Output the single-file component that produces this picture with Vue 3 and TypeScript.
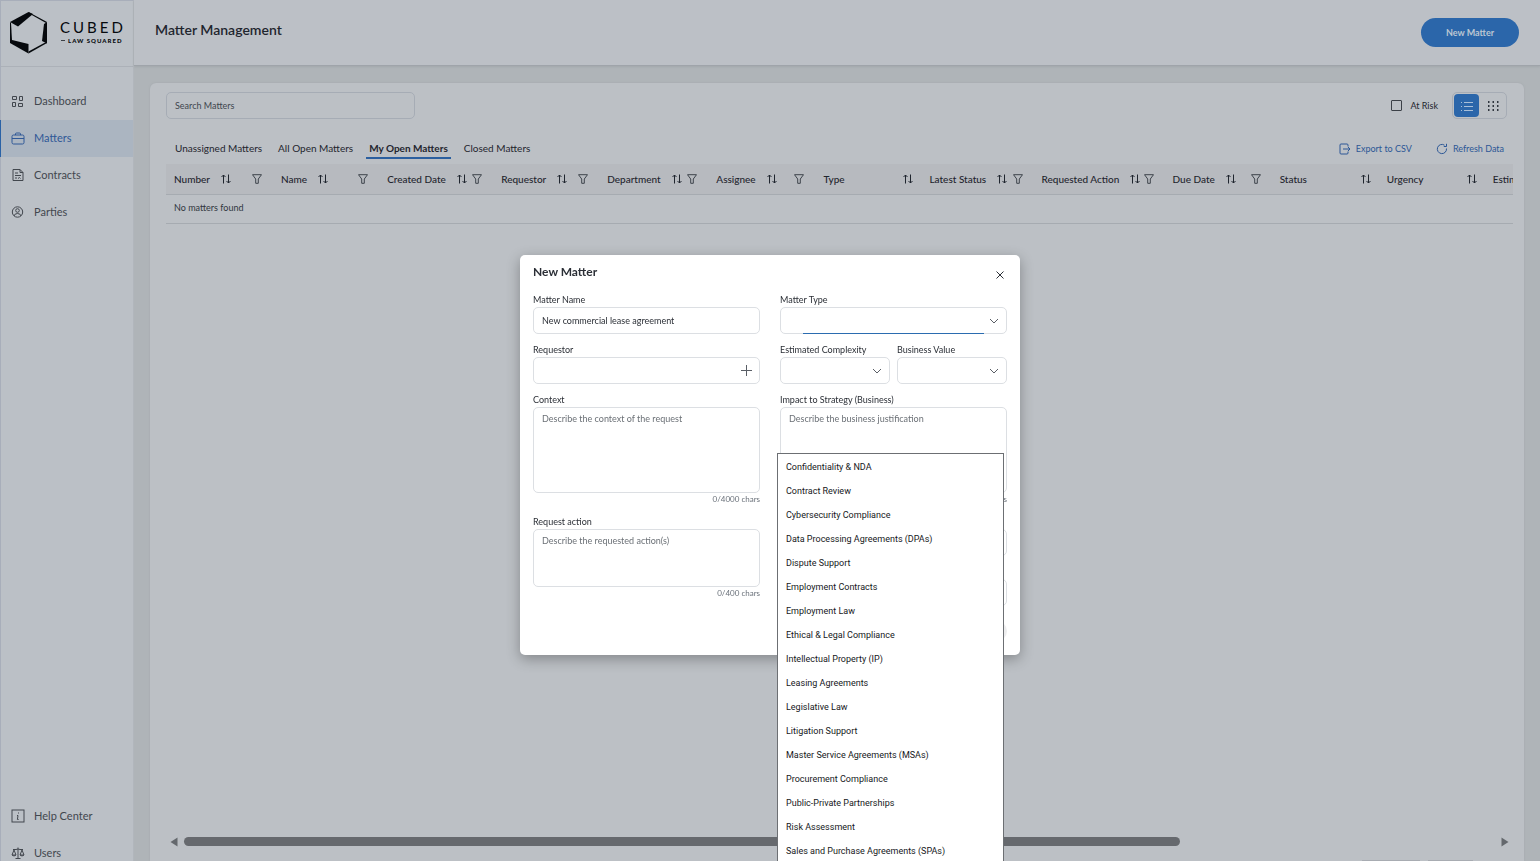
<script setup lang="ts">
import { ref } from 'vue'

interface NavItem { label: string; icon: string }
interface Column { label: string; width: number; filter: boolean }

const mainNav: NavItem[] = [
  { label: 'Dashboard', icon: 'grid' },
  { label: 'Matters', icon: 'case' },
  { label: 'Contracts', icon: 'doc' },
  { label: 'Parties', icon: 'person' },
]
const footNav: NavItem[] = [
  { label: 'Help Center', icon: 'info' },
  { label: 'Users', icon: 'scales' },
]
const tabs: string[] = ['Unassigned Matters', 'All Open Matters', 'My Open Matters', 'Closed Matters']
const columns: Column[] = [
  { label: 'Number', width: 107, filter: true },
  { label: 'Name', width: 106, filter: true },
  { label: 'Created Date', width: 114, filter: true },
  { label: 'Requestor', width: 106, filter: true },
  { label: 'Department', width: 109, filter: true },
  { label: 'Assignee', width: 107, filter: true },
  { label: 'Type', width: 106, filter: false },
  { label: 'Latest Status', width: 112, filter: true },
  { label: 'Requested Action', width: 131, filter: true },
  { label: 'Due Date', width: 107, filter: true },
  { label: 'Status', width: 107, filter: false },
  { label: 'Urgency', width: 106, filter: false },
  { label: 'Estimated Complexity', width: 160, filter: false },
]
const matterTypes: string[] = [
  'Confidentiality & NDA', 'Contract Review', 'Cybersecurity Compliance',
  'Data Processing Agreements (DPAs)', 'Dispute Support', 'Employment Contracts',
  'Employment Law', 'Ethical & Legal Compliance', 'Intellectual Property (IP)',
  'Leasing Agreements', 'Legislative Law', 'Litigation Support',
  'Master Service Agreements (MSAs)', 'Procurement Compliance',
  'Public-Private Partnerships', 'Risk Assessment', 'Sales and Purchase Agreements (SPAs)',
]

const activeNav = ref('Matters')
const activeTab = ref('My Open Matters')
const search = ref('')
const atRisk = ref(false)
const matterName = ref('New commercial lease agreement')
const requestor = ref('')
const matterType = ref('')
const context = ref('')
const impact = ref('')
const action = ref('')
</script>

<template>
  <div class="app">
    <aside class="sidebar">
      <div class="brand">
        <svg class="brand-mark" viewBox="0 0 38 42" aria-hidden="true">
          <path d="M0 10 18.500 0 23 2 8 14.500Z" />
          <path d="M18.500 0 37 10 36 11 20 2Z" />
          <path d="M37 10v21.500l-5-2.500 2-17Z" />
          <path d="M0 27.500 18.500 32v9.500L0 31Z" />
          <path d="M0 10 1 11 2 28 0 31Z" />
          <path d="M18.500 41.500 37 31 36 30 18.500 39.500Z" />
        </svg>
        <div class="brand-text">
          <span class="brand-name">CUBED</span>
          <span class="brand-sub"><i class="brand-by"></i>LAW SQUARED</span>
        </div>
      </div>
      <nav class="nav">
        <ul v-for="(group, g) in [mainNav, footNav]" :key="g" class="nav-group" :class="{ foot: g === 1 }">
          <li v-for="item in group" :key="item.label">
            <a href="#" class="nav-item" :class="{ active: item.label === activeNav }" @click.prevent="activeNav = item.label">
              <svg class="nav-icon" viewBox="0 0 14 14" aria-hidden="true">
                <g v-if="item.icon === 'grid'">
                  <path d="M1.500 2.500h4v3h-4ZM8.500 2.500h3v4h-3ZM1.500 8.500h3v4h-3ZM7.500 9.500h4v3h-4Z" />
                </g>
                <g v-else-if="item.icon === 'case'">
                  <rect x="1" y="4" width="12" height="9" rx="1.500" /><path d="M4.500 4V3q0-1 1-1h3q1 0 1 1v1M1 7.500h12" />
                </g>
                <g v-else-if="item.icon === 'doc'">
                  <path d="M2 1.500h7L12 4.500v8H2ZM9 1.500v3h3M4 5h3M4 7.500h6M4 10h2M7 10.500l1.500-1 1 1" />
                </g>
                <g v-else-if="item.icon === 'person'">
                  <circle cx="6.500" cy="7" r="5.200" /><circle cx="6.500" cy="5.500" r="1.800" /><path d="M3 11q.5-2.500 3.500-2.500T10 11" />
                </g>
                <g v-else-if="item.icon === 'info'">
                  <rect x="1" y="1" width="12" height="12" /><path d="M7.500 3.500v1M6 6.500h1l-.6 4h1.200" />
                </g>
                <g v-else>
                  <path d="M7 1.500V12M4.500 12.500h5M2 3.500h3L7 3l2 .5h3M3 4 1 9M3 4l2 5M1 9q2 2 4 0ZM11 4 9 9M11 4l2 5M9 9q2 2 4 0Z" />
                </g>
              </svg>
              <span>{{ item.label }}</span>
            </a>
          </li>
        </ul>
      </nav>
    </aside>

    <div class="content">
      <header class="topbar">
        <h1>Matter Management</h1>
        <button type="button" class="primary">New Matter</button>
      </header>

      <main class="page">
        <section class="card">
          <div class="toolbar">
            <input v-model="search" class="search" type="text" placeholder="Search Matters" aria-label="Search Matters" />
            <label class="risk"><input v-model="atRisk" type="checkbox" />At Risk</label>
            <div class="toggle">
              <button type="button" class="on" aria-label="List view">
                <svg viewBox="0 0 14 12"><path d="M4 2.500h9M4 6.500h9M4 10.500h9M1 2.500h1M1 6.500h1M1 10.500h1" /></svg>
              </button>
              <button type="button" aria-label="Grid view">
                <svg viewBox="0 0 14 12" class="dots"><path d="M2 2h1.500M6.500 2H8M11 2h1.500M2 6h1.500M6.500 6H8M11 6h1.500M2 10h1.500M6.500 10H8M11 10h1.500" /></svg>
              </button>
            </div>
          </div>

          <div class="tabrow">
            <div class="tabs">
              <button v-for="tab in tabs" :key="tab" type="button" :class="{ current: tab === activeTab }" @click="activeTab = tab">{{ tab }}</button>
            </div>
            <div class="links">
              <a href="#" @click.prevent>
                <svg viewBox="0 0 12 12"><path d="M9 3.500V2q0-1-1-1H2Q1 1 1 2v8q0 1 1 1h6q1 0 1-1V8.500M4 6h7M9 4l2 2-2 2" /></svg>Export to CSV
              </a>
              <a href="#" @click.prevent>
                <svg viewBox="0 0 12 12"><path d="M10.500 5.500A4.600 4.600 0 1 1 8.500 2.200M10.500.8V3.500H7.800" /></svg>Refresh Data
              </a>
            </div>
          </div>

          <div class="table-box">
            <table>
              <colgroup><col v-for="c in columns" :key="c.label" :style="{ width: c.width + 'px' }" /></colgroup>
              <thead>
                <tr>
                  <th v-for="c in columns" :key="c.label" scope="col">
                    <div class="th" :class="{ plain: !c.filter }">
                      <span>{{ c.label }}</span>
                      <svg class="sort" viewBox="0 0 10 10"><path d="M2.500 9.500V1M.5 3l2-2 2 2M7.500.5V9M5.500 7l2 2 2-2" /></svg>
                      <svg v-if="c.filter" class="filter" viewBox="0 0 10 10"><path d="M.5.7h9L6.300 5v4.300H3.700V5Z" /></svg>
                    </div>
                  </th>
                </tr>
              </thead>
              <tbody><tr><td :colspan="columns.length">No matters found</td></tr></tbody>
            </table>
          </div>

          <div class="scroller" aria-hidden="true">
            <svg viewBox="0 0 8 10"><path d="M7.500.5v9L.5 5Z" /></svg>
            <div class="track"><div class="thumb"></div></div>
            <svg viewBox="0 0 8 10"><path d="M.5.5v9l7-4.500Z" /></svg>
          </div>
          <div class="pager"><span class="pager-wide"></span><span class="pager-small"></span></div>
        </section>
      </main>
    </div>

    <div class="overlay">
      <form class="modal" role="dialog" aria-labelledby="dialog-title" @submit.prevent>
        <div class="modal-head">
          <h2 id="dialog-title">New Matter</h2>
          <button type="button" class="close" aria-label="Close">
            <svg viewBox="0 0 8 8"><path d="M.5.5l7 7M7.500.5l-7 7" /></svg>
          </button>
        </div>
        <div class="columns">
          <div class="col">
            <div class="field">
              <label for="name">Matter Name</label>
              <input id="name" v-model="matterName" type="text" />
            </div>
            <div class="field">
              <label for="requestor">Requestor</label>
              <div class="with-icon">
                <input id="requestor" v-model="requestor" type="text" />
                <button type="button" class="add" aria-label="Add requestor">
                  <svg viewBox="0 0 12 12"><path d="M6.500 1v11M1 6.500h11" /></svg>
                </button>
              </div>
            </div>
            <div class="field">
              <label for="context">Context</label>
              <textarea id="context" v-model="context" class="tall" placeholder="Describe the context of the request"></textarea>
              <span class="count">{{ context.length }}/4000 chars</span>
            </div>
            <div class="field">
              <label for="action">Request action</label>
              <textarea id="action" v-model="action" class="short" placeholder="Describe the requested action(s)"></textarea>
              <span class="count">{{ action.length }}/400 chars</span>
            </div>
          </div>

          <div class="col">
            <div class="field">
              <label for="type">Matter Type</label>
              <div class="with-icon">
                <select id="type" v-model="matterType"><option v-for="t in matterTypes" :key="t">{{ t }}</option></select>
                <svg class="chev" viewBox="0 0 10 6"><path d="M1 1l4 4 4-4" /></svg>
                <div class="progress"></div>
                <ul class="menu" role="listbox" aria-label="Matter Type">
                  <li v-for="t in matterTypes" :key="t" role="option" @click="matterType = t">{{ t }}</li>
                </ul>
              </div>
            </div>
            <div class="pair">
              <div class="field">
                <label for="complexity">Estimated Complexity</label>
                <div class="with-icon">
                  <select id="complexity"></select>
                  <svg class="chev" viewBox="0 0 10 6"><path d="M1 1l4 4 4-4" /></svg>
                </div>
              </div>
              <div class="field">
                <label for="value">Business Value</label>
                <div class="with-icon">
                  <select id="value"></select>
                  <svg class="chev" viewBox="0 0 10 6"><path d="M1 1l4 4 4-4" /></svg>
                </div>
              </div>
            </div>
            <div class="field">
              <label for="impact">Impact to Strategy (Business)</label>
              <textarea id="impact" v-model="impact" class="tall" placeholder="Describe the business justification"></textarea>
              <span class="count">{{ impact.length }}/4000 chars</span>
            </div>
            <div class="field bare"><select aria-label="Urgency"></select></div>
            <div class="field bare"><input type="text" aria-label="Due Date" /></div>
          </div>
        </div>
        <div class="modal-foot"><button type="submit" class="submit" aria-label="Submit" disabled></button></div>
      </form>
    </div>
  </div>
</template>

<style>
body { background: #afb4b8; overflow: hidden; }
</style>

<style scoped>
* { box-sizing: border-box; }
.app { display: flex; height: 100vh; overflow: hidden; background: #afb4b8; font-family: Lato, "Liberation Sans", sans-serif; font-size: 9px; color: #1f252e; }
button, input, textarea, select { font: inherit; color: inherit; margin: 0; }
button { padding: 0; border: 0; background: none; }
svg { display: block; fill: none; stroke: currentColor; stroke-width: 1; flex: none; }
a { color: inherit; text-decoration: none; }
ul { list-style: none; margin: 0; padding: 0; }

.sidebar { display: flex; flex-direction: column; flex: none; width: 134px; background: #bbc0c6; border-left: 1px solid #a8aeba; border-top: 1px solid #a8aeba; border-right: 1px solid #b1b6bc; }
.brand { display: flex; align-items: center; gap: 12px; flex: none; height: 66px; padding: 0 0 2px 9px; border-bottom: 1px solid #acb1b8; color: #06090d; }
.brand-mark { width: 38px; height: 42px; fill: currentColor; stroke: none; }
.brand-text { display: flex; flex-direction: column; }
.brand-name { font-size: 15px; line-height: 16px; letter-spacing: 3px; }
.brand-sub { display: flex; align-items: center; gap: 3px; padding-left: 1px; font-size: 6px; line-height: 11px; font-weight: 900; letter-spacing: 1px; white-space: nowrap; }
.brand-by { width: 4px; height: 1px; background: #3c4046; }
.nav { display: flex; flex-direction: column; flex: 1; min-height: 0; padding-top: 16px; }
.nav-group.foot { margin-top: auto; margin-bottom: -11px; }
.nav-item { display: flex; align-items: center; gap: 9px; height: 37px; padding: 0 0 2px 10px; border-left: 1px solid transparent; margin-left: -1px; font-size: 11px; color: #42474e; }
.nav-icon { width: 14px; height: 14px; }
.nav-item.active { background: #abb5c1; border-left-color: #2a62a6; color: #2f5897; }

.content { display: flex; flex-direction: column; flex: 1; min-width: 0; }
.topbar { display: flex; justify-content: space-between; align-items: center; flex: none; height: 66px; padding: 0 21px; background: #bcc0c6; border-bottom: 1px solid #9fa4aa; box-shadow: 0 1px 2px #a2a7ac; }
h1 { margin: 0 0 5px; font-size: 14px; font-weight: 600; line-height: 18px; }
.primary { width: 98px; height: 29px; padding-bottom: 1px; border-radius: 15px; background: #2b66aa; color: #bcc6d2; font-weight: 700; }
.page { display: flex; flex: 1; min-height: 0; padding: 17px 16px 0; }
.card { display: flex; flex-direction: column; flex: 1; min-width: 0; overflow: hidden; padding: 9px 11px 0 16px; background: #bcc0c5; border-radius: 6px 6px 0 0; box-shadow: 0 0 2px #a0a5aa; }
.toolbar { display: flex; align-items: center; flex: none; height: 27px; padding-right: 6px; }
.search { width: 249px; height: 27px; padding: 0 8px 1px; margin-right: auto; border: 1px solid #a6acb5; border-radius: 5px; background: transparent; outline: 0; }
.search::placeholder { color: #40464e; opacity: 1; }
.risk { display: flex; align-items: center; gap: 8px; margin-right: 14px; padding-bottom: 1px; }
.risk input { appearance: none; width: 11px; height: 11px; border: 1px solid #3b4047; border-radius: 1px; }
.toggle { display: flex; gap: 1px; padding: 1px; border: 1px solid #a6acb5; border-radius: 5px; flex: none; }
.toggle button { display: grid; place-items: center; width: 25px; height: 23px; border-radius: 4px; color: #30363e; }
.toggle button.on { background: #2b66aa; color: #a9bfd8; }
.toggle svg { width: 14px; height: 12px; }
.dots { stroke-width: 2; }
.tabrow { display: flex; justify-content: space-between; align-items: center; flex: none; height: 21px; margin: 19px 9px 5px 6px; }
.tabs { display: flex; gap: 10px; }
.tabs button { height: 21px; padding: 0 3px; border-bottom: 2px solid transparent; font-size: 10px; white-space: nowrap; }
.tabs .current { border-color: #2b5f9f; font-weight: 700; }
.links { display: flex; gap: 24px; color: #2c5796; }
.links a { display: flex; align-items: center; gap: 5px; }
.links svg { width: 12px; height: 12px; }
.table-box { overflow: hidden; flex: none; }
table { table-layout: fixed; width: 1479px; border-collapse: collapse; }
th, td { padding: 0 8px; text-align: left; border-bottom: 1px solid #a6abb1; white-space: nowrap; }
th { height: 30px; background: #b7babf; font-size: 10px; font-weight: 500; }
td { height: 29px; padding-bottom: 3px; color: #30363e; }
.th { display: flex; align-items: center; }
.sort { width: 10px; height: 10px; margin-left: 11px; }
.filter { width: 10px; height: 10px; margin-left: auto; margin-right: 3px; color: #3e444c; }
.plain .sort { margin-left: auto; }
.scroller { display: flex; align-items: center; gap: 6px; height: 11px; margin: auto 4px 13px 4px; flex: none; }
.scroller svg { width: 8px; height: 10px; fill: #64686d; stroke: none; }
.track { flex: 1; }
.thumb { width: 76%; height: 9px; border-radius: 5px; background: #66696e; }
.pager { display: flex; justify-content: flex-end; gap: 8px; height: 1px; padding-right: 40px; flex: none; }
.pager span { height: 1px; background: #a8acb2; }
.pager-wide { width: 58px; }
.pager-small { width: 45px; }

.overlay { position: fixed; inset: 0; display: flex; justify-content: center; align-items: flex-start; padding-top: 255px; overflow: hidden; }
.modal { width: 500px; padding: 0 13px 14px; border-radius: 5px; background: #fff; box-shadow: 0 4px 14px rgba(0, 0, 0, .3); color: #2b2f36; }
.modal-head { display: flex; justify-content: space-between; align-items: flex-start; height: 38px; padding-top: 9px; }
h2 { margin: 0; font-size: 12px; line-height: 16px; font-weight: 700; }
.close { display: grid; place-items: center; width: 14px; height: 22px; }
.close svg { width: 8px; height: 8px; }
.columns { display: grid; grid-template-columns: 1fr 1fr; gap: 20px; }
.col { display: flex; flex-direction: column; gap: 9px; min-width: 0; }
.pair { display: grid; grid-template-columns: 1fr 1fr; gap: 7px; }
.field { display: flex; flex-direction: column; min-width: 0; }
.field.bare { padding-top: 14px; }
.field label { line-height: 14px; white-space: nowrap; }
.field input, .field select, .field textarea { display: block; width: 100%; padding: 0 8px; border: 1px solid #dcdfe3; border-radius: 5px; background: #fff; outline: 0; }
.field input, .field select { height: 27px; }
.field select { appearance: none; }
.field textarea { padding-top: 5px; line-height: 12px; resize: none; }
.field textarea::placeholder { color: #6b7076; opacity: 1; }
.field .tall { height: 86px; }
.field .short { height: 58px; }
.count { align-self: flex-end; font-size: 8px; line-height: 13px; color: #6a717a; }
.with-icon { position: relative; }
.add { position: absolute; right: 8px; top: 7px; color: #5a5f66; }
.add svg { width: 12px; height: 12px; }
.chev { position: absolute; right: 8px; top: 11px; width: 10px; height: 6px; color: #5a5f66; }
.progress { position: absolute; left: 23px; right: 23px; bottom: 0; height: 1px; background: #2b6cb0; }
.menu { position: absolute; z-index: 2; left: -3px; top: 146px; width: 100%; padding: 1px 0; border: 1px solid #6c6f73; background: #fff; font-family: Roboto, "Noto Sans", sans-serif; font-size: 9px; color: #16181b; }
.menu li { height: 24px; line-height: 24px; padding: 0 8px; white-space: nowrap; }
.modal-foot { display: flex; justify-content: flex-end; margin-top: 15px; }
.submit { width: 70px; height: 20px; border-radius: 10px; background: #ededee; }
</style>
